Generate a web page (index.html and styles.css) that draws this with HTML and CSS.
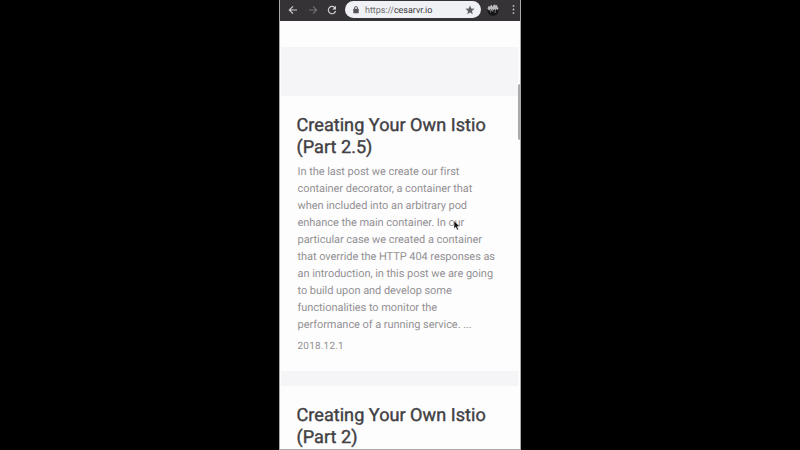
FILE: index.html
```html
<!DOCTYPE html>
<html lang="en">
<head>
<meta charset="utf-8">
<title>cesarvr.io</title>
<link rel="stylesheet" href="styles.css">
</head>
<body>
<div class="window">
  <header class="toolbar">
    <svg class="nav" viewBox="0 0 10 10"><path d="M9 5H1.5M5 1.3L1.3 5L5 8.7"/></svg>
    <svg class="nav dim" viewBox="0 0 10 10"><path d="M1 5H8.5M5 1.3L8.7 5L5 8.7"/></svg>
    <svg class="nav" viewBox="0 0 10 10"><path d="M8.1 3A3.7 3.7 0 1 0 8.6 6"/><path class="solid" d="M9 .8V4.5H5.3Z"/></svg>
    <div class="address">
      <svg class="lock" viewBox="0 0 6 8"><rect x=".3" y="2.8" width="5.4" height="4.4" rx=".5"/><path d="M1.5 3V2a1.5 1.5 0 0 1 3 0V3"/></svg>
      <span class="url">https://<b>cesarvr.io</b></span>
      <svg class="star" viewBox="0 0 24 24"><path d="M12 17.8L18.6 22l-1.8-7.7L22.8 9.200l-7.800-.7L12 1.400 9 8.500l-7.800.7 6 5.100L5.400 22z"/></svg>
    </div>
    <svg class="avatar" viewBox="0 0 12 12"><circle cx="6" cy="6.300" r="5.500" fill="#151517"/><path d="M.5 4.500L1.500 2l1.500.5L4 .8l1.300.7L5.500 3 6.500 1l1.500-.5.500 1L10 1l.7 2 .8 1.500L10.500 6 9.300 5l-.6 1.500L7.500 5l-.8 1.500L5.500 5l-.8 2L3.500 5l-1 1.500L1.500 6z" fill="#b8b8bb"/><path d="M3.600 6v2.500M5.600 5v3M8.200 5v4" stroke="#8c8c8f" stroke-width=".8"/></svg>
    <svg class="more" viewBox="0 0 3 11"><circle cx="1.500" cy="1.900" r=".95"/><circle cx="1.500" cy="5.500" r=".95"/><circle cx="1.500" cy="9.100" r=".95"/></svg>
  </header>
  <main class="page">
    <div class="intro"></div>
    <article class="post first">
      <h2>Creating Your Own Istio<br>(Part 2.5)</h2>
      <p>In the last post we create our first<br>container decorator, a container that<br>when included into an arbitrary pod<br>enhance the main container. In our<br>particular case we created a container<br>that override the HTTP 404 responses as<br>an introduction, in this post we are going<br>to build upon and develop some<br>functionalities to monitor the<br>performance of a running service. ...</p>
      <time>2018.12.1</time>
    </article>
    <article class="post">
      <h2>Creating Your Own Istio<br>(Part 2)</h2>
    </article>
  </main>
  <div class="scrollbar"></div>
</div>
<svg class="cursor" viewBox="0 0 8 12"><path d="M1 .8V8.700L2.800 7.100 4 10 5.500 9.400 4.300 6.600H6.800Z"/></svg>
</body>
</html>
```

FILE: styles.css
```css
body {
  margin: 0;
  height: 450px;
  overflow: hidden;
  background: #000;
  font-family: Roboto, "Liberation Sans", sans-serif;
  text-rendering: geometricPrecision;
}
.window {
  position: relative;
  box-sizing: border-box;
  width: 242px;
  height: 450px;
  margin-left: 279px;
  overflow: hidden;
  border: solid #aaa;
  border-width: 0 1px 1px;
  background: #fefdfe;
}
.toolbar {
  display: flex;
  align-items: center;
  box-sizing: border-box;
  height: 21px;
  margin: 0 -1px;
  padding: 0 6px 2px 9px;
  background: #353336;
}
.nav {
  flex: none;
  width: 10px;
  height: 10px;
  margin-right: 9.500px;
  fill: none;
  stroke: #d0d0d2;
  stroke-width: 1.150;
}
.nav.dim { stroke: #737175; }
.nav .solid { fill: #d0d0d2; stroke: none; }
.address {
  display: flex;
  align-items: center;
  box-sizing: border-box;
  width: 136px;
  height: 17px;
  margin-left: -2px;
  padding: 0 6px 0 8px;
  border-radius: 9px;
  background: #f0f1f4;
}
.lock { width: 6px; height: 8px; fill: #555459; }
.lock path { fill: none; stroke: #555459; stroke-width: .9; }
.url {
  margin-left: 6.500px;
  padding-top: 2px;
  font-size: 9px;
  line-height: 16px;
  letter-spacing: -.03px;
  color: #6d6d70;
}
.url b { font-weight: 400; color: #3c3c40; }
.star { width: 10px; height: 10px; margin-left: auto; fill: #616165; }
.avatar { width: 12px; height: 12px; margin-left: 6.500px; }
.more { width: 3px; height: 11px; margin-left: auto; fill: #bdbdbf; }
.page { margin: 0 2px 0 1px; }
.intro { height: 26px; }
.post {
  height: 275px;
  box-sizing: border-box;
  padding: 19px 0 0 15.500px;
  border-top: 15px solid #f5f4f6;
  white-space: nowrap;
}
.post.first { height: 324px; border-top-width: 49px; }
h2 {
  margin: 0;
  font-size: 18.100px;
  font-weight: 400;
  line-height: 22px;
  letter-spacing: .02px;
  color: #414043;
  -webkit-text-stroke: .4px #414043;
}
p {
  margin: 5px 0 0 1px;
  font-size: 11px;
  line-height: 16.950px;
  letter-spacing: -.05px;
  color: #929194;
}
time {
  display: block;
  margin: 5px 0 0 1px;
  font-size: 10px;
  line-height: 16px;
  letter-spacing: .2px;
  color: #929194;
}
.scrollbar {
  position: absolute;
  top: 84px;
  right: -1px;
  width: 3px;
  height: 56px;
  border-radius: 2px 0 0 2px;
  background: #aaa9ab;
}
.cursor {
  position: absolute;
  left: 453px;
  top: 220px;
  width: 8px;
  height: 12px;
  fill: #111;
  stroke: #fff;
  stroke-width: .5;
}
```
